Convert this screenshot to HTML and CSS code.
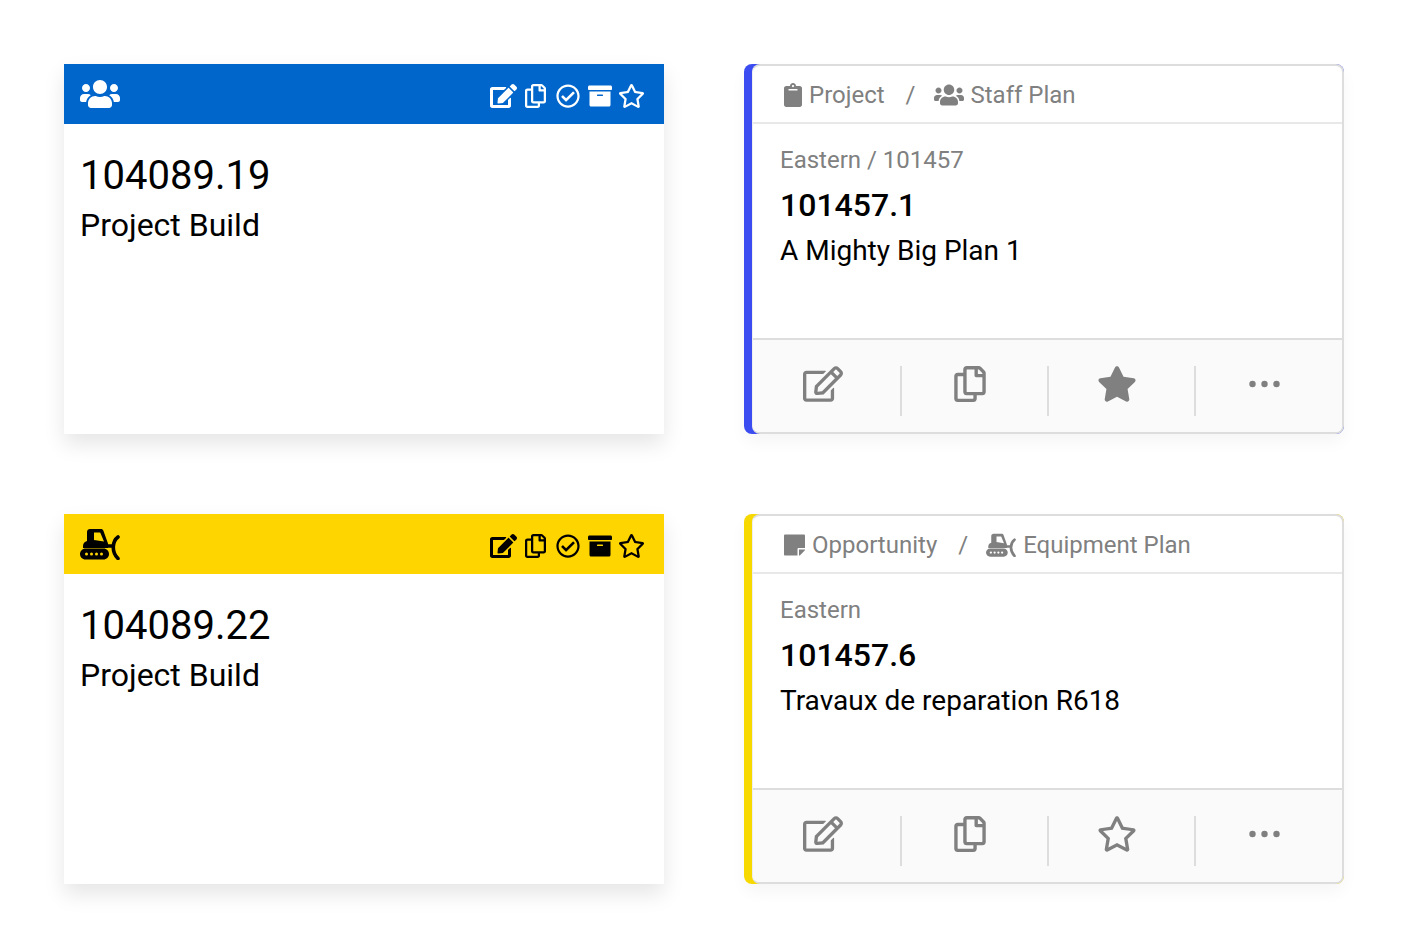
FILE: index.html
```html
<!DOCTYPE html>
<html>
  <head>
    <meta charset="utf-8" />
    <title>Plan cards</title>
    <link rel="stylesheet" href="styles.css">
  </head>
  <body>
    <svg class="sprites" xmlns="http://www.w3.org/2000/svg">
      <symbol id="i-users" viewBox="0 0 640 512"><path d="M96 224c35.3 0 64-28.7 64-64s-28.7-64-64-64-64 28.7-64 64 28.7 64 64 64zm448 0c35.3 0 64-28.7 64-64s-28.7-64-64-64-64 28.7-64 64 28.7 64 64 64zm32 32h-64c-17.6 0-33.5 7.1-45.1 18.6 40.3 22.1 68.9 62 75.1 109.4h66c17.7 0 32-14.3 32-32v-32c0-35.3-28.7-64-64-64zm-256 0c61.9 0 112-50.1 112-112S381.9 32 320 32 208 82.1 208 144s50.1 112 112 112zm76.8 32h-8.3c-20.8 10-43.9 16-68.5 16s-47.6-6-68.5-16h-8.3C179.6 288 128 339.6 128 403.2V432c0 26.5 21.5 48 48 48h288c26.5 0 48-21.5 48-48v-28.8c0-63.6-51.6-115.2-115.2-115.2zm-223.7-13.4C161.5 263.1 145.6 256 128 256H64c-35.3 0-64 28.7-64 64v32c0 17.7 14.3 32 32 32h65.9c6.3-47.4 34.9-87.3 75.2-109.4z"/></symbol>
      <symbol id="i-edit" viewBox="0 0 576 512"><path d="M402.6 83.2l90.2 90.2c3.8 3.8 3.8 10 0 13.8L274.4 405.6l-92.8 10.3c-12.4 1.4-22.9-9.1-21.5-21.5l10.3-92.8L388.8 83.2c3.8-3.8 10-3.8 13.8 0zm162-22.9l-48.8-48.8c-15.2-15.2-39.9-15.2-55.2 0l-35.4 35.4c-3.8 3.8-3.8 10 0 13.8l90.2 90.2c3.8 3.8 10 3.8 13.8 0l35.4-35.4c15.2-15.3 15.2-40 0-55.2zM384 346.2V448H64V128h229.8c3.2 0 6.2-1.3 8.5-3.5l40-40c7.6-7.6 2.2-20.5-8.5-20.5H48C21.5 64 0 85.5 0 112v352c0 26.5 21.5 48 48 48h352c26.5 0 48-21.5 48-48V306.2c0-10.7-12.9-16-20.5-8.5l-40 40c-2.2 2.3-3.5 5.3-3.5 8.5z"/></symbol>
      <symbol id="i-edit-line" viewBox="0 0 576 512"><path d="M402.3 344.9l32-32c5-5 13.7-1.5 13.7 5.7V464c0 26.5-21.5 48-48 48H48c-26.5 0-48-21.5-48-48V112c0-26.5 21.5-48 48-48h273.5c7.1 0 10.7 8.6 5.7 13.7l-32 32c-1.5 1.5-3.5 2.3-5.7 2.3H48v352h352V350.5c0-2.1.8-4.1 2.3-5.6zm156.6-201.8L296.3 405.7l-90.4 10c-26.2 2.9-48.5-19.2-45.6-45.6l10-90.4L432.9 17.1c22.9-22.9 59.9-22.9 82.7 0l43.2 43.2c22.9 22.9 22.9 60 .1 82.8zM460.1 174L402 115.9 216.2 301.8l-7.3 65.3 65.3-7.3L460.1 174zm64.8-79.7l-43.2-43.2c-4.1-4.1-10.8-4.1-14.8 0L436 82l58.1 58.1 30.9-30.9c4-4.2 4-10.8-.1-14.9z"/></symbol>
      <symbol id="i-copy" viewBox="0 0 448 512"><path d="M433.941 65.941l-51.882-51.882A48 48 0 0 0 348.118 0H176c-26.51 0-48 21.49-48 48v48H48c-26.51 0-48 21.49-48 48v320c0 26.51 21.49 48 48 48h224c26.51 0 48-21.49 48-48v-48h80c26.51 0 48-21.49 48-48V99.882a48 48 0 0 0-14.059-33.941zM266 464H54a6 6 0 0 1-6-6V150a6 6 0 0 1 6-6h74v224c0 26.51 21.49 48 48 48h96v42a6 6 0 0 1-6 6zm128-96H182a6 6 0 0 1-6-6V54a6 6 0 0 1 6-6h106v88c0 13.255 10.745 24 24 24h88v202a6 6 0 0 1-6 6zm6-256h-64V48h9.632c1.591 0 3.117.632 4.243 1.757l48.368 48.368a6 6 0 0 1 1.757 4.243V112z"/></symbol>
      <symbol id="i-check" viewBox="0 0 512 512"><path d="M256 8C119.033 8 8 119.033 8 256s111.033 248 248 248 248-111.033 248-248S392.967 8 256 8zm0 48c110.532 0 200 89.451 200 200 0 110.532-89.451 200-200 200-110.532 0-200-89.451-200-200 0-110.532 89.451-200 200-200m140.204 130.267l-22.536-22.718c-4.667-4.705-12.265-4.736-16.97-.068L215.346 303.697l-59.792-60.277c-4.667-4.705-12.265-4.736-16.97-.069l-22.719 22.536c-4.705 4.667-4.736 12.265-.068 16.971l90.781 91.516c4.667 4.705 12.265 4.736 16.97.068l172.589-171.204c4.704-4.668 4.734-12.266.067-16.971z"/></symbol>
      <symbol id="i-archive" viewBox="0 0 512 512"><path d="M32 448c0 17.7 14.3 32 32 32h384c17.7 0 32-14.3 32-32V160H32v288zm160-212c0-6.6 5.4-12 12-12h104c6.6 0 12 5.4 12 12v8c0 6.6-5.4 12-12 12H204c-6.6 0-12-5.4-12-12v-8zM480 32H32C14.3 32 0 46.3 0 64v48c0 8.8 7.2 16 16 16h480c8.8 0 16-7.2 16-16V64c0-17.7-14.3-32-32-32z"/></symbol>
      <symbol id="i-star" viewBox="0 0 576 512"><path d="M528.1 171.5L382 150.2 316.7 17.8c-11.7-23.6-45.6-23.9-57.4 0L194 150.2 47.9 171.5c-26.2 3.8-36.7 36.1-17.7 54.6l105.7 103-25 145.5c-4.5 26.3 23.2 46 46.4 33.7L288 439.6l130.7 68.7c23.2 12.2 50.9-7.4 46.4-33.7l-25-145.5 105.7-103c19-18.5 8.5-50.8-17.7-54.6zM388.6 312.3l23.7 138.4L288 385.4l-124.3 65.3 23.7-138.4-100.6-98 139-20.2 62.2-126 62.2 126 139 20.2-100.6 98z"/></symbol>
      <symbol id="i-star-full" viewBox="0 0 576 512"><path d="M259.3 17.8L194 150.2 47.9 171.5c-26.2 3.8-36.7 36.1-17.7 54.6l105.7 103-25 145.5c-4.5 26.3 23.2 46 46.4 33.7L288 439.6l130.7 68.7c23.2 12.2 50.9-7.4 46.4-33.7l-25-145.5 105.7-103c19-18.5 8.5-50.8-17.7-54.6L382 150.2 316.7 17.8c-11.7-23.6-45.6-23.9-57.4 0z"/></symbol>
      <symbol id="i-clipboard" viewBox="0 0 384 512"><path d="M384 112v352c0 26.51-21.49 48-48 48H48c-26.51 0-48-21.49-48-48V112c0-26.51 21.49-48 48-48h80c0-35.29 28.71-64 64-64s64 28.71 64 64h80c26.51 0 48 21.49 48 48zM192 40c-13.255 0-24 10.745-24 24s10.745 24 24 24 24-10.745 24-24-10.745-24-24-24m96 114v-20a6 6 0 0 0-6-6H102a6 6 0 0 0-6 6v20a6 6 0 0 0 6 6h180a6 6 0 0 0 6-6z"/></symbol>
      <symbol id="i-note" viewBox="0 0 448 512"><path d="M312 320h136V56c0-13.3-10.7-24-24-24H24C10.7 32 0 42.7 0 56v400c0 13.3 10.7 24 24 24h264V344c0-13.2 10.8-24 24-24zm129 55l-98 98c-4.5 4.5-10.6 7-17 7h-6V352h128v6.1c0 6.3-2.5 12.4-7 16.9z"/></symbol>
      <symbol id="i-dozer" viewBox="0 0 40 32">
        <path fill-rule="evenodd" d="M10 1h11c1.100 0 2 .6 2.400 1.700L28 15.500V20H3v-2c0-2.500 1.700-4.500 4-5V4c0-1.700 1.300-3 3-3zm4 3.500V12l10 1.500-3.800-9H14z"/>
        <path fill-rule="evenodd" d="M5.500 20.500h18c3 0 5.500 2.400 5.500 5.500s-2.500 5.500-5.500 5.500h-18C2.500 31.500 0 29 0 26s2.500-5.500 5.500-5.500zm1 4a1.500 1.500 0 1 0 0 3 1.500 1.500 0 0 0 0-3zm5 0a1.500 1.500 0 1 0 0 3 1.500 1.500 0 0 0 0-3zm5 0a1.500 1.500 0 1 0 0 3 1.500 1.500 0 0 0 0-3zm5 0a1.500 1.500 0 1 0 0 3 1.500 1.500 0 0 0 0-3z"/>
        <path class="blade" d="M38 9c-5.500 4-7 14.500 0 21.500"/>
        <path class="blade" d="M27 18h6"/>
      </symbol>
      <symbol id="i-dots" viewBox="0 0 32 36"><circle cx="3.500" cy="18" r="3.200"/><circle cx="15.500" cy="18" r="3.200"/><circle cx="27.500" cy="18" r="3.200"/></symbol>
    </svg>

    <div class="board">
      <div class="tile tile-blue">
        <div class="tile-bar">
          <svg class="bar-kind"><use href="#i-users"/></svg>
          <div class="bar-tools">
            <svg class="w27"><use href="#i-edit"/></svg>
            <svg class="w21"><use href="#i-copy"/></svg>
            <svg class="w24 push"><use href="#i-check"/></svg>
            <svg class="w24"><use href="#i-archive"/></svg>
            <svg class="w27 pull"><use href="#i-star"/></svg>
          </div>
        </div>
        <div class="tile-body">
          <div class="tile-num">104089.19</div>
          <div class="tile-name">Project Build</div>
        </div>
      </div>

      <div class="plan plan-blue">
        <div class="plan-inner">
          <div class="crumbs">
            <svg class="c-clip"><use href="#i-clipboard"/></svg>
            <span class="crumb">Project</span>
            <span class="crumb-sep">/</span>
            <svg class="c-kind"><use href="#i-users"/></svg>
            <span class="crumb">Staff Plan</span>
          </div>
          <div class="plan-body">
            <div class="plan-path">Eastern / 101457</div>
            <div class="plan-num">101457.1</div>
            <div class="plan-name">A Mighty Big Plan 1</div>
          </div>
          <div class="plan-foot">
            <div class="foot-cell"><svg class="f40"><use href="#i-edit-line"/></svg></div>
            <div class="foot-cell"><svg class="f32"><use href="#i-copy"/></svg></div>
            <div class="foot-cell"><svg class="f40"><use href="#i-star-full"/></svg></div>
            <div class="foot-cell foot-last"><svg class="f32"><use href="#i-dots"/></svg></div>
          </div>
        </div>
      </div>

      <div class="tile tile-yellow">
        <div class="tile-bar">
          <svg class="bar-kind"><use href="#i-dozer"/></svg>
          <div class="bar-tools">
            <svg class="w27"><use href="#i-edit"/></svg>
            <svg class="w21"><use href="#i-copy"/></svg>
            <svg class="w24 push"><use href="#i-check"/></svg>
            <svg class="w24"><use href="#i-archive"/></svg>
            <svg class="w27 pull"><use href="#i-star"/></svg>
          </div>
        </div>
        <div class="tile-body">
          <div class="tile-num">104089.22</div>
          <div class="tile-name">Project Build</div>
        </div>
      </div>

      <div class="plan plan-yellow">
        <div class="plan-inner">
          <div class="crumbs">
            <svg class="c-note"><use href="#i-note"/></svg>
            <span class="crumb">Opportunity</span>
            <span class="crumb-sep">/</span>
            <svg class="c-kind"><use href="#i-dozer"/></svg>
            <span class="crumb">Equipment Plan</span>
          </div>
          <div class="plan-body">
            <div class="plan-path">Eastern</div>
            <div class="plan-num">101457.6</div>
            <div class="plan-name">Travaux de reparation R618</div>
          </div>
          <div class="plan-foot">
            <div class="foot-cell"><svg class="f40"><use href="#i-edit-line"/></svg></div>
            <div class="foot-cell"><svg class="f32"><use href="#i-copy"/></svg></div>
            <div class="foot-cell"><svg class="f40"><use href="#i-star"/></svg></div>
            <div class="foot-cell foot-last"><svg class="f32"><use href="#i-dots"/></svg></div>
          </div>
        </div>
      </div>
    </div>
  </body>
</html>
```

FILE: styles.css
```css
body {
  margin: 0;
  background-color: #fff;
  font-family: Roboto, sans-serif;
  color: #000;
}
svg {
  fill: currentColor;
  display: block;
  flex: none;
}
.blade {
  fill: none;
  stroke: currentColor;
  stroke-width: 3.6;
  stroke-linecap: round;
}
.sprites {
  display: none;
}
.board {
  display: grid;
  grid-template-columns: 600px 600px;
  grid-auto-rows: 370px;
  gap: 80px;
  padding: 64px;
}

/* left cards */
.tile {
  background-color: #fff;
  box-shadow: 0 10px 20px rgba(0, 0, 0, 0.1);
}
.tile-bar {
  height: 60px;
  display: flex;
  align-items: center;
  justify-content: space-between;
  padding: 0 19px 0 16px;
}
.tile-blue .tile-bar {
  background-color: #0066cc;
  color: #fff;
}
.tile-yellow .tile-bar {
  background-color: #ffd500;
}
.bar-kind {
  width: 40px;
  height: 32px;
}
.bar-tools {
  display: flex;
  gap: 8px;
  padding-top: 3px;
}
.bar-tools svg {
  height: 24px;
}
.bar-tools .push {
  margin-left: 2px;
}
.bar-tools .pull {
  margin-left: -2px;
}
.w21 {
  width: 21px;
}
.w24 {
  width: 24px;
}
.w27 {
  width: 27px;
}
.tile-body {
  padding: 28px 16px 0;
}
.tile-num {
  font-size: 40px;
  line-height: 48px;
}
.tile-name {
  font-size: 32px;
  line-height: 38px;
  margin-top: 6px;
}

/* right cards */
.plan {
  border-radius: 8px;
  padding-left: 8px;
  box-shadow: 0 8px 16px rgba(0, 0, 0, 0.04);
}
.plan-blue {
  background-color: #3b4cf0;
}
.plan-yellow {
  background-color: #f7d900;
}
.plan-inner {
  box-sizing: border-box;
  height: 100%;
  display: flex;
  flex-direction: column;
  background-color: #fff;
  border: 2px solid #ddd;
  border-left: 1px solid #eee;
  border-radius: 8px;
}
.crumbs {
  box-sizing: border-box;
  height: 58px;
  flex: none;
  display: flex;
  align-items: center;
  padding: 2px 0 0 31px;
  border-bottom: 2px solid #e8e8e8;
  color: #808080;
  font-size: 24px;
}
.crumb-sep {
  margin: 0 18px 0 21px;
}
.c-clip {
  width: 18px;
  height: 24px;
  margin-right: 7px;
}
.c-note {
  width: 21px;
  height: 24px;
  margin-right: 7px;
}
.c-kind {
  width: 30px;
  height: 24px;
  margin-right: 7px;
}
.plan-body {
  flex: 1;
  padding: 22px 27px 0;
}
.plan-path {
  color: #808080;
  font-size: 24px;
  line-height: 28px;
}
.plan-num {
  font-size: 32px;
  font-weight: 500;
  line-height: 38px;
  margin-top: 12px;
}
.plan-name {
  font-size: 28px;
  line-height: 34px;
  margin-top: 10px;
}
.plan-foot {
  box-sizing: border-box;
  height: 94px;
  flex: none;
  display: flex;
  align-items: flex-start;
  padding: 26px 0 0 2px;
  background-color: #fafafa;
  border-top: 2px solid #ddd;
  border-radius: 0 0 6px 6px;
  color: #808080;
}
.foot-cell {
  box-sizing: border-box;
  flex: none;
  width: 147px;
  height: 50px;
  padding-right: 9px;
  display: flex;
  justify-content: center;
  border-right: 2px solid #ddd;
}
.foot-last {
  flex: 1;
  width: auto;
  border-right: 0;
}
.foot-cell svg {
  height: 36px;
}
.f40 {
  width: 40px;
}
.f32 {
  width: 32px;
}
```
